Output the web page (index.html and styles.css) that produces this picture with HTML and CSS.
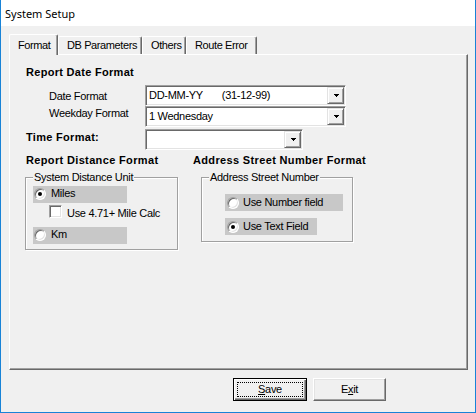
FILE: index.html
```html
<!DOCTYPE html>
<html>
<head>
<meta charset="utf-8">
<title>System Setup</title>
<link rel="stylesheet" href="styles.css">
</head>
<body>
<div class="window">
  <div class="titlebar">System Setup</div>
  <div class="client">
    <div class="tabs">
      <div class="tab tab-active tab-format">Format</div>
      <div class="tab tab-db">DB Parameters</div>
      <div class="tab tab-others">Others</div>
      <div class="tab tab-route">Route Error</div>
    </div>

    <div class="panel">
      <div class="heading">Report Date Format</div>

      <div class="field-row row-date">
        <span class="field-label label-date">Date Format</span>
        <div class="combo combo-wide">
          <span class="combo-text">DD-MM-YY<span class="combo-sample">(31-12-99)</span></span>
          <span class="drop-btn"><svg width="5" height="3" viewBox="0 0 5 3"><path d="M0 0H5V1H4V2H3V3H2V2H1V1H0Z"/></svg></span>
        </div>
      </div>

      <div class="field-row row-weekday">
        <span class="field-label label-weekday">Weekday Format</span>
        <div class="combo combo-wide">
          <span class="combo-text">1 Wednesday</span>
          <span class="drop-btn"><svg width="5" height="3" viewBox="0 0 5 3"><path d="M0 0H5V1H4V2H3V3H2V2H1V1H0Z"/></svg></span>
        </div>
      </div>

      <div class="field-row row-time">
        <span class="field-label label-time">Time Format:</span>
        <div class="combo combo-narrow">
          <span class="combo-text"></span>
          <span class="drop-btn"><svg width="5" height="3" viewBox="0 0 5 3"><path d="M0 0H5V1H4V2H3V3H2V2H1V1H0Z"/></svg></span>
        </div>
      </div>

      <div class="dist-cols">
        <div class="col col-left">
          <div class="heading-inline">Report Distance Format</div>
          <div class="group group-distance">
            <span class="group-label">System Distance Unit</span>
            <div class="opt opt-miles"><span class="radio checked"></span><span class="opt-text">Miles</span></div>
            <div class="check-row"><span class="checkbox"></span><span class="opt-text">Use 4.71+ Mile Calc</span></div>
            <div class="opt opt-km"><span class="radio"></span><span class="opt-text">Km</span></div>
          </div>
        </div>
        <div class="col col-right">
          <div class="heading-inline">Address Street Number Format</div>
          <div class="group group-address">
            <span class="group-label">Address Street Number</span>
            <div class="opt opt-number"><span class="radio"></span><span class="opt-text">Use Number field</span></div>
            <div class="opt opt-textfield"><span class="radio checked"></span><span class="opt-text">Use Text Field</span></div>
          </div>
        </div>
      </div>
    </div>

    <div class="buttons">
      <div class="btn btn-default"><span class="focus-rect"><u>S</u>ave</span></div>
      <div class="btn btn-exit">E<u>x</u>it</div>
    </div>
  </div>
</div>
</body>
</html>
```

FILE: styles.css
```css
* {
  box-sizing: border-box;
}

body {
  margin: 0;
  font-family: "Liberation Sans", Arial, sans-serif;
  font-size: 11px;
  line-height: 13px;
  letter-spacing: -0.3px;
  color: #000;
  background: #fff;
}

/* ---------- window frame ---------- */
.window {
  width: 476px;
  height: 413px;
  border: 1px solid #1883d7;
  border-top: none;
  display: flex;
  flex-direction: column;
  background: #f0f0f0;
}

.titlebar {
  height: 26px;
  flex: none;
  background: #fff;
  font-family: "Noto Sans", "Liberation Sans", sans-serif;
  font-size: 11px;
  line-height: 14px;
  letter-spacing: 0;
  padding: 7px 0 0 4px;
}

.client {
  flex: 1;
  padding: 8px 0 0 8px;
}

/* ---------- tab strip ---------- */
.tabs {
  display: flex;
  align-items: flex-end;
  height: 20px;
}

.tab {
  position: relative;
  height: 18px;
  padding: 2px 0 0 8px;
  border-top: 1px solid #fff;
  border-left: 1px solid #fff;
  border-right: 1px solid #696969;
  box-shadow: inset -1px 0 0 #a0a0a0;
  border-top-left-radius: 2px;
  border-top-right-radius: 2px;
  background: #f0f0f0;
  white-space: nowrap;
  letter-spacing: -0.4px;
}

.tab-active {
  z-index: 1;
  height: 21px;
  margin-bottom: -1px;
  padding-top: 4px;
}

.tab-format { width: 49px; }
.tab-db { width: 84px; }
.tab-others { width: 44px; }
.tab-route { width: 71px; }

/* ---------- tab page ---------- */
.panel {
  width: 459px;
  height: 316px;
  padding-top: 11px;
  border: 1px solid;
  border-color: #fff #696969 #696969 #fff;
  box-shadow: inset -1px -1px 0 #a0a0a0;
}

.heading {
  margin-left: 16px;
  font-weight: bold;
  letter-spacing: 0.3px;
}

.field-row {
  display: flex;
  height: 21px;
}

.row-date { margin-top: 6px; }
.row-time { margin-top: 2px; }

.field-label {
  flex: none;
}

.label-date {
  width: 96px;
  margin-left: 39px;
  padding-top: 5px;
}

.label-weekday {
  width: 96px;
  margin-left: 39px;
  padding-top: 1px;
}

.label-time {
  width: 119px;
  margin-left: 16px;
  padding-top: 2px;
  font-weight: bold;
  letter-spacing: 0.3px;
}

/* ---------- combo boxes ---------- */
.combo {
  display: flex;
  height: 21px;
  border: 1px solid;
  border-color: #a0a0a0 #fff #fff #a0a0a0;
  box-shadow: inset 1px 1px 0 #696969, inset -1px -1px 0 #e3e3e3;
  background: #fff;
}

.combo-wide { width: 201px; }
.combo-narrow { width: 158px; }

.combo-text {
  flex: 1;
  padding: 3px 0 0 3px;
  white-space: nowrap;
}

.combo-sample {
  margin-left: 19px;
}

.drop-btn {
  flex: none;
  display: flex;
  align-items: center;
  justify-content: center;
  width: 17px;
  height: 17px;
  margin: 1px 1px 1px 0;
  border: 1px solid;
  border-color: #e3e3e3 #696969 #696969 #e3e3e3;
  box-shadow: inset 1px 1px 0 #fff, inset -1px -1px 0 #a0a0a0;
  background: #f0f0f0;
}

.drop-btn svg {
  display: block;
  margin-left: 1px;
  shape-rendering: crispEdges;
}

/* ---------- distance / address columns ---------- */
.dist-cols {
  display: flex;
  margin-top: 4px;
}

.col-left {
  width: 167px;
  margin-left: 16px;
}

.heading-inline {
  font-weight: bold;
  letter-spacing: 0.35px;
  white-space: nowrap;
}

.group {
  position: relative;
  margin-top: 10px;
  border: 1px solid #a0a0a0;
  box-shadow: inset 1px 1px 0 #fff, 1px 1px 0 #fff;
}

.group-label {
  position: absolute;
  top: -7px;
  left: 7px;
  padding: 0 1px;
  background: #f0f0f0;
  white-space: nowrap;
}

.group-distance {
  width: 153px;
  height: 73px;
  margin-left: -1px;
  padding: 8px 0 0 7px;
}

.group-address {
  width: 152px;
  height: 65px;
  margin-left: 8px;
  padding: 16px 0 0 23px;
}

.opt {
  display: flex;
  align-items: flex-start;
  height: 17px;
  padding: 1px 0 0 1px;
  background: #c8c8c8;
}

.opt-miles,
.opt-km { width: 94px; }

.opt-km { margin-top: 9px; }

.opt-number {
  width: 118px;
  padding-left: 2px;
  padding-top: 2px;
}

.opt-textfield {
  width: 92px;
  margin-top: 7px;
  padding-left: 2px;
  padding-top: 2px;
}

.radio {
  position: relative;
  flex: none;
  width: 12px;
  height: 12px;
  margin-top: 1px;
  border: 1px solid;
  border-color: #a0a0a0 #fff #fff #a0a0a0;
  border-radius: 50%;
  box-shadow: inset 1px 1px 0 #696969, inset -1px -1px 0 #e3e3e3;
  background: #fff;
}

.radio.checked::after {
  content: "";
  position: absolute;
  left: 3px;
  top: 3px;
  width: 4px;
  height: 4px;
  border-radius: 50%;
  background: #000;
}

.opt-miles .opt-text,
.opt-km .opt-text { margin-left: 5px; }

.opt-number .opt-text,
.opt-textfield .opt-text { margin-left: 4px; }

.opt-text {
  white-space: nowrap;
}

.check-row {
  display: flex;
  align-items: flex-start;
  margin: 2px 0 0 16px;
  height: 13px;
}

.checkbox {
  flex: none;
  width: 13px;
  height: 13px;
  border: 1px solid;
  border-color: #a0a0a0 #fff #fff #a0a0a0;
  box-shadow: inset 1px 1px 0 #696969, inset -1px -1px 0 #e3e3e3;
  background: #fff;
}

.check-row .opt-text {
  margin-left: 5px;
  padding-top: 2px;
}

/* ---------- command buttons ---------- */
.buttons {
  display: flex;
  gap: 6px;
  margin-top: 8px;
  padding-left: 224px;
}

.btn {
  display: flex;
  align-items: center;
  justify-content: center;
  height: 23px;
  background: #f0f0f0;
}

.btn-default {
  width: 74px;
  padding: 3px;
  border: 1px solid #000;
  box-shadow: inset 1px 1px 0 #fff, inset -1px -1px 0 #696969, inset -2px -2px 0 #a0a0a0;
}

.focus-rect {
  flex: 1;
  align-self: stretch;
  display: flex;
  align-items: center;
  justify-content: center;
  border: 1px dotted #000;
}

.btn-exit {
  width: 73px;
  border: 1px solid;
  border-color: #fff #696969 #696969 #fff;
  box-shadow: inset -1px -1px 0 #a0a0a0, inset 1px 1px 0 #e3e3e3;
}
```
